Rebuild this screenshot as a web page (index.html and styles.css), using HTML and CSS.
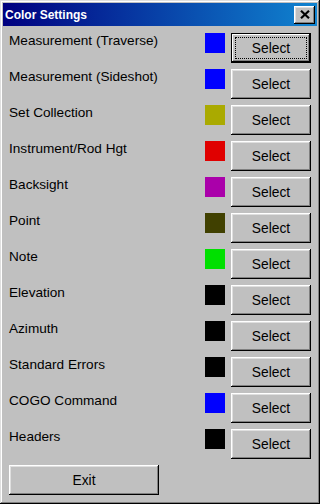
FILE: index.html
```html
<!DOCTYPE html>
<html>
<head>
<meta charset="utf-8">
<link rel="stylesheet" href="styles.css">
</head>
<body>
<div class="window">
  <div class="titlebar">
    <span class="title">Color Settings</span>
    <button class="close" aria-label="Close">
      <svg width="10" height="9" viewBox="0 0 10 9"><path d="M1 0.8 L9 8.2 M9 0.8 L1 8.2" stroke="#000" stroke-width="2.2" fill="none"/></svg>
    </button>
  </div>
  <div class="content">
    <div class="row"><span class="label">Measurement (Traverse)</span><span class="swatch" style="background:#0000ff"></span><button class="btn default"><span class="focus">Select</span></button></div>
    <div class="row"><span class="label">Measurement (Sideshot)</span><span class="swatch" style="background:#0000ff"></span><button class="btn">Select</button></div>
    <div class="row"><span class="label">Set Collection</span><span class="swatch" style="background:#aaaa00"></span><button class="btn">Select</button></div>
    <div class="row"><span class="label">Instrument/Rod Hgt</span><span class="swatch" style="background:#e00000"></span><button class="btn">Select</button></div>
    <div class="row"><span class="label">Backsight</span><span class="swatch" style="background:#aa00aa"></span><button class="btn">Select</button></div>
    <div class="row"><span class="label">Point</span><span class="swatch" style="background:#404000"></span><button class="btn">Select</button></div>
    <div class="row"><span class="label">Note</span><span class="swatch" style="background:#00e000"></span><button class="btn">Select</button></div>
    <div class="row"><span class="label">Elevation</span><span class="swatch" style="background:#000000"></span><button class="btn">Select</button></div>
    <div class="row"><span class="label">Azimuth</span><span class="swatch" style="background:#000000"></span><button class="btn">Select</button></div>
    <div class="row"><span class="label">Standard Errors</span><span class="swatch" style="background:#000000"></span><button class="btn">Select</button></div>
    <div class="row"><span class="label">COGO Command</span><span class="swatch" style="background:#0000ff"></span><button class="btn">Select</button></div>
    <div class="row"><span class="label">Headers</span><span class="swatch" style="background:#000000"></span><button class="btn">Select</button></div>
    <button class="btn exit">Exit</button>
  </div>
</div>
</body>
</html>
```

FILE: styles.css
```css
html, body {
  margin: 0;
  padding: 0;
  background: #c0c0c0;
}

.window {
  box-sizing: border-box;
  width: 320px;
  height: 504px;
  padding: 3px;
  background: #c0c0c0;
  box-shadow: inset -1px -1px #000000, inset 1px 1px #dfdfdf, inset -2px -2px #808080, inset 2px 2px #ffffff;
  font-family: "Liberation Sans", Arial, sans-serif;
}

.titlebar {
  height: 23px;
  display: flex;
  align-items: center;
  justify-content: space-between;
  padding: 0 2px 0 2px;
  background: linear-gradient(to right, #000080, #1084d0);
}

.title {
  color: #ffffff;
  font-weight: bold;
  font-size: 12px;
  padding-top: 1px;
}

.close {
  box-sizing: border-box;
  width: 21px;
  height: 18px;
  padding: 0;
  margin: 0;
  border: none;
  background: #c0c0c0;
  display: flex;
  align-items: center;
  justify-content: center;
  box-shadow: inset -1px -1px #000000, inset 1px 1px #ffffff, inset -2px -2px #808080, inset 2px 2px #dfdfdf;
}

.content {
  padding: 7px 6px 0 6px;
  display: flex;
  flex-direction: column;
  gap: 6px;
}

.row {
  display: flex;
  align-items: flex-start;
  height: 30px;
}

.label {
  flex: 1;
  font-size: 13.6px;
  line-height: 16px;
  color: #000;
}

.swatch {
  width: 20px;
  height: 20px;
  margin-right: 6px;
}

.btn {
  box-sizing: border-box;
  width: 80px;
  height: 30px;
  padding: 0;
  margin: 0;
  border: none;
  background: #c0c0c0;
  font-family: "Liberation Sans", Arial, sans-serif;
  font-size: 13.8px;
  color: #000;
  display: flex;
  align-items: center;
  justify-content: center;
  box-shadow: inset -1px -1px #000000, inset 1px 1px #ffffff, inset -2px -2px #808080, inset 2px 2px #dfdfdf;
}

.btn.default {
  box-shadow: inset 0 0 0 1px #000000, inset -2px -2px #000000, inset 2px 2px #ffffff, inset -3px -3px #808080;
  padding: 4px;
}

.focus {
  box-sizing: border-box;
  width: 100%;
  height: 100%;
  display: flex;
  align-items: center;
  justify-content: center;
  border: 1px dotted #000;
}

.exit {
  width: 150px;
  height: 30px;
}
```
